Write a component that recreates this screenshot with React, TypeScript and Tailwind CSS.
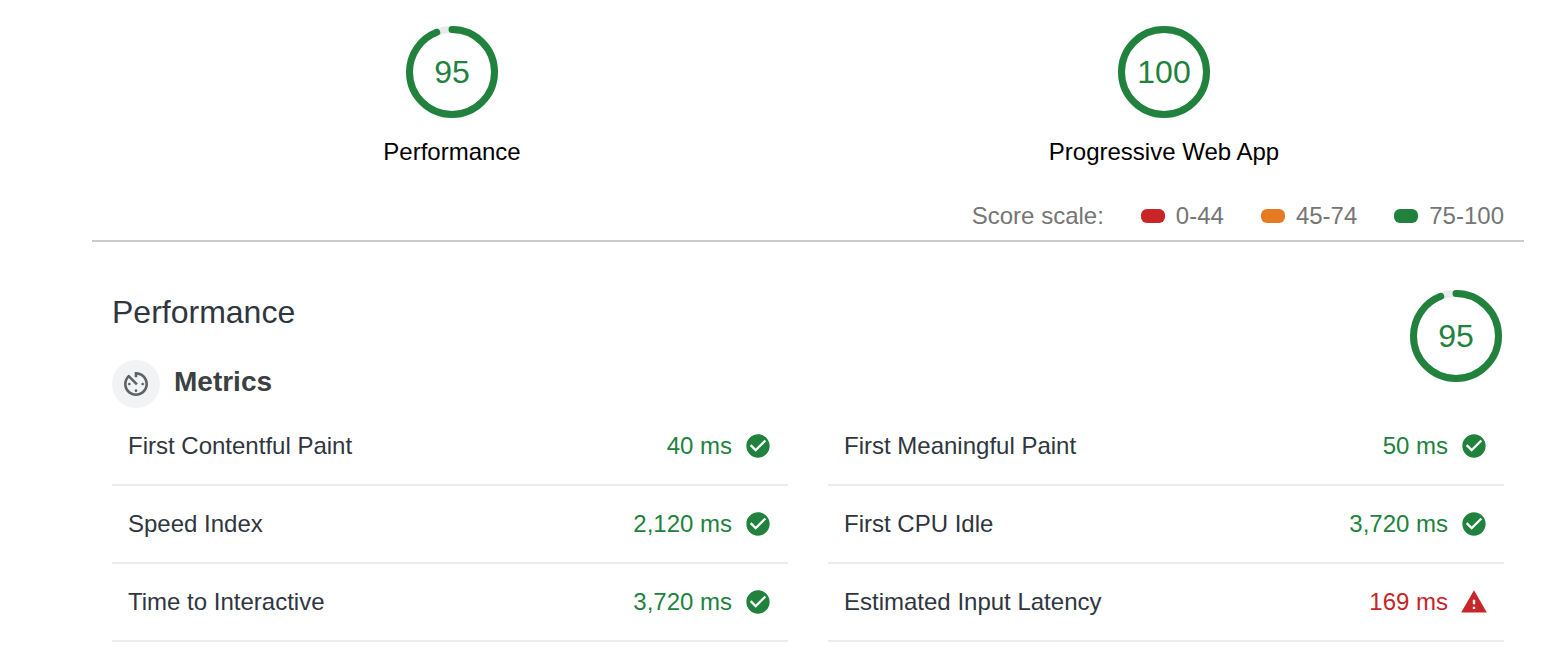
type Status = 'pass' | 'fail';

interface Metric {
  label: string;
  value: string;
  status: Status;
}

const METRICS: Metric[] = [
  { label: 'First Contentful Paint', value: '40 ms', status: 'pass' },
  { label: 'First Meaningful Paint', value: '50 ms', status: 'pass' },
  { label: 'Speed Index', value: '2,120 ms', status: 'pass' },
  { label: 'First CPU Idle', value: '3,720 ms', status: 'pass' },
  { label: 'Time to Interactive', value: '3,720 ms', status: 'pass' },
  { label: 'Estimated Input Latency', value: '169 ms', status: 'fail' },
];

const SCALE = [
  { range: '0-44', color: 'bg-[#c72528]' },
  { range: '45-74', color: 'bg-[#e67a22]' },
  { range: '75-100', color: 'bg-[#20823c]' },
];

const RADIUS = 42.5;
const CIRCUMFERENCE = 2 * Math.PI * RADIUS;

function Gauge({ score }: { score: number }) {
  // The round cap covers part of the gap, so a partial arc ends a little early.
  const arc = score === 100 ? CIRCUMFERENCE : CIRCUMFERENCE * (score / 100 - 0.01);
  return (
    <div className="grid size-24 shrink-0 place-items-center">
      <svg viewBox="0 0 96 96" className="col-start-1 row-start-1 size-24" fill="none" strokeWidth="7" aria-hidden="true">
        <circle cx="48" cy="48" r={RADIUS} stroke="#e8eaed" />
        <circle
          cx="48"
          cy="48"
          r={RADIUS}
          stroke="#20823c"
          strokeLinecap="round"
          strokeDasharray={`${arc} ${CIRCUMFERENCE}`}
          transform="rotate(-90 48 48)"
        />
      </svg>
      <span className="col-start-1 row-start-1 text-[32px] leading-10 text-[#20823c]">{score}</span>
    </div>
  );
}

function StatusIcon({ status }: { status: Status }) {
  return (
    <svg viewBox="0 0 48 48" className="size-7 shrink-0" fill="currentColor" aria-hidden="true">
      {status === 'pass' ? (
        <path d="M24 4C12.95 4 4 12.95 4 24c0 11.04 8.95 20 20 20 11.04 0 20-8.96 20-20 0-11.05-8.96-20-20-20zm-4 30L10 24l2.83-2.83L20 28.34l15.17-15.17L38 16 20 34z" />
      ) : (
        <path d="M2 42h44L24 4 2 42zm24-6h-4v-4h4v4zm0-8h-4v-8h4v8z" />
      )}
    </svg>
  );
}

function TimerIcon() {
  return (
    <svg viewBox="0 0 24 24" className="size-8" fill="#5f6368" aria-hidden="true">
      <path d="M11 17c0 .55.45 1 1 1s1-.45 1-1-.45-1-1-1-1 .45-1 1zm0-14v4h2V5.08c3.39.49 6 3.39 6 6.92 0 3.87-3.13 7-7 7s-7-3.13-7-7c0-1.68.59-3.22 1.58-4.42L12 13l1.41-1.41-6.8-6.8v.02C4.42 6.45 3 9.05 3 12c0 4.97 4.02 9 9 9 4.97 0 9-4.03 9-9s-4.03-9-9-9h-1zm7 9c0-.55-.45-1-1-1s-1 .45-1 1 .45 1 1 1 1-.45 1-1zM6 12c0 .55.45 1 1 1s1-.45 1-1-.45-1-1-1-1 .45-1 1z" />
    </svg>
  );
}

function ScoreSummary({ score, label }: { score: number; label: string }) {
  return (
    <div className="flex flex-col items-center gap-4">
      <Gauge score={score} />
      <span className="text-2xl text-black">{label}</span>
    </div>
  );
}

export default function App() {
  return (
    <main className="bg-white pt-6 pr-[42px] pl-[92px] font-['Liberation_Sans',Arial,sans-serif] text-[#2f3640]">
      <header className="border-b-2 border-[#cbcbcb] pb-2">
        <div className="grid grid-cols-2 px-1">
          <ScoreSummary score={95} label="Performance" />
          <ScoreSummary score={100} label="Progressive Web App" />
        </div>
        <div className="mt-8 flex justify-end gap-[37px] px-5 text-2xl text-[#757575]">
          <span>Score scale:</span>
          {SCALE.map(({ range, color }) => (
            <span key={range} className="flex items-center gap-[11px]">
              <span className={`h-[14px] w-6 rounded-md ${color}`} />
              {range}
            </span>
          ))}
        </div>
      </header>

      <section className="px-5 pt-[46px]">
        <div className="flex items-start justify-between">
          <div className="pt-1">
            <h1 className="text-[32px] leading-10">Performance</h1>
            <div className="mt-7 flex items-start gap-[14px]">
              <span className="grid size-12 place-items-center rounded-full bg-[#f1f3f4]">
                <TimerIcon />
              </span>
              <h2 className="text-[28px] leading-11 font-bold text-[#3c4043]">Metrics</h2>
            </div>
          </div>
          <Gauge score={95} />
        </div>

        <dl className="grid grid-cols-2 gap-x-10">
          {METRICS.map(({ label, value, status }) => (
            <div key={label} className="flex items-center justify-between border-b-2 border-[#ebebeb] px-4 py-[22px] text-2xl">
              <dt>{label}</dt>
              <dd className={`flex items-center gap-3 ${status === 'pass' ? 'text-[#20823c]' : 'text-[#c72528]'}`}>
                {value}
                <StatusIcon status={status} />
              </dd>
            </div>
          ))}
        </dl>
      </section>
    </main>
  );
}
